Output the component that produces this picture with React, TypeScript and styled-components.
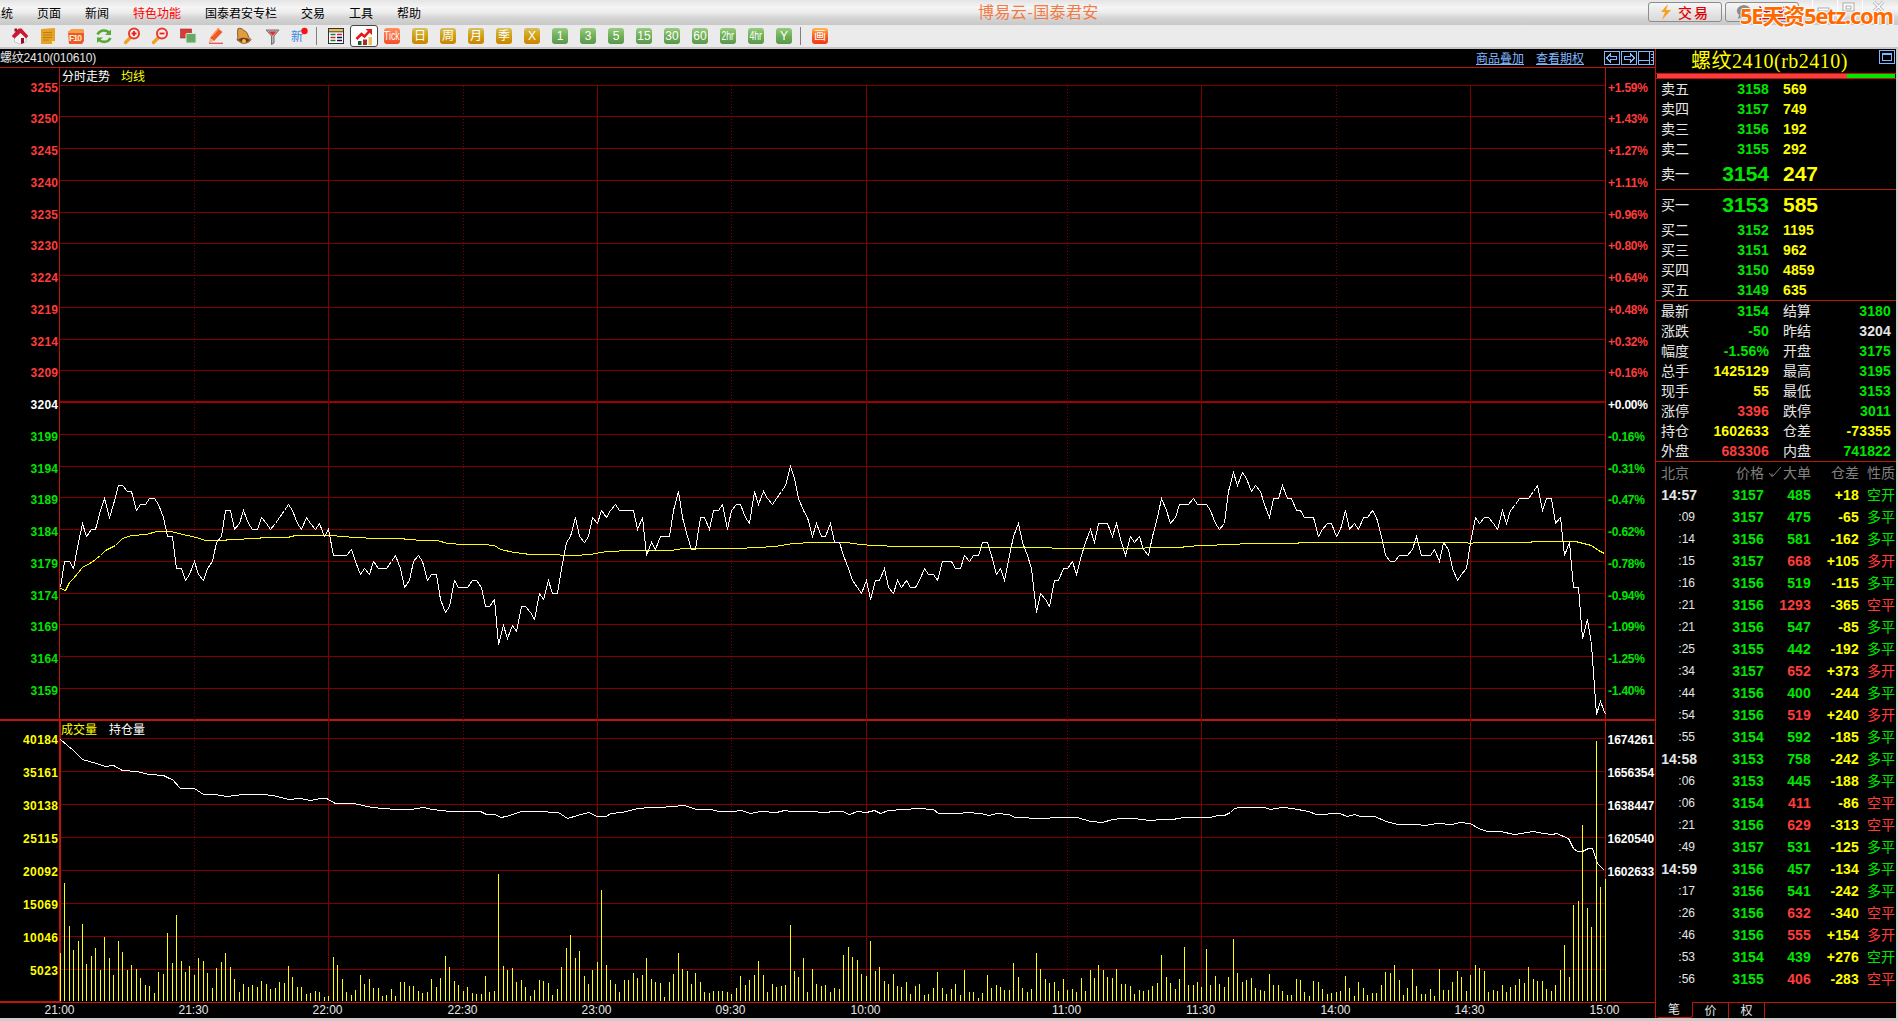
import React from 'react';
import styled, { createGlobalStyle } from 'styled-components';

const CJK = `'Noto Sans CJK SC', sans-serif`;

const GlobalStyle = createGlobalStyle`
  * { box-sizing: border-box; }
  body {
    margin: 0;
    overflow: hidden;
    background: #000;
    font-family: 'Liberation Sans', ${CJK};
    font-size: 12px;
  }
`;

const RED = '#ff3c3c';
const GREEN = '#00e600';
const YELLOW = '#ffff00';
const WHITE = '#e6e6e6';
const LINE = '#c01408';
const GRID = '#800000';

// ---------- data ----------

// one price per minute, offset from 3100
const PRICES = [
  75, 79, 79, 78, 82, 85, 83, 84, 84, 87, 89, 86, 88, 91, 91, 90, 90, 87, 88, 88, 89, 89, 88, 86, 83, 83, 78, 78, 76, 77,
  79, 77, 76, 78, 79, 82, 83, 87, 87, 84, 85, 87, 85, 84, 84, 86, 85, 84, 85, 86, 87, 88, 87, 85, 84, 86, 85, 84, 85, 83,
  84, 80, 80, 80, 80, 81, 79, 77, 78, 77, 79, 78, 78, 78, 79, 80, 78, 75, 76, 79, 80, 79, 76, 77, 77, 73, 71, 72, 76, 75,
  75, 75, 76, 76, 75, 72, 72, 73, 66, 69, 67, 69, 68, 72, 72, 71, 70, 74, 73, 76, 74, 74, 78, 82, 83, 86, 83, 82, 83, 86,
  85, 87, 86, 87, 88, 87, 87, 87, 87, 84, 86, 80, 82, 81, 83, 83, 83, 87, 90, 86, 83, 81, 81, 86, 86, 84, 87, 87, 88, 84,
  87, 88, 88, 86, 85, 90, 88, 90, 89, 88, 89, 90, 91, 94, 92, 89, 87, 86, 83, 85, 83, 83, 85, 82, 82, 80, 78, 76, 75, 74,
  76, 73, 76, 76, 78, 75, 74, 76, 75, 76, 75, 75, 76, 78, 77, 77, 76, 79, 79, 79, 78, 78, 80, 79, 80, 80, 82, 82, 80, 77,
  78, 76, 80, 83, 85, 82, 80, 78, 71, 74, 73, 72, 76, 76, 78, 78, 79, 77, 80, 82, 84, 82, 85, 85, 85, 83, 85, 82, 80, 83,
  82, 83, 81, 80, 83, 86, 89, 87, 85, 86, 88, 88, 88, 89, 88, 88, 88, 87, 85, 84, 85, 90, 93, 91, 93, 92, 90, 91, 90, 88,
  86, 89, 89, 91, 89, 89, 87, 87, 86, 86, 86, 83, 84, 85, 85, 83, 84, 87, 84, 85, 84, 86, 86, 87, 86, 83, 80, 79, 79, 80,
  80, 80, 81, 83, 80, 80, 80, 81, 79, 82, 81, 78, 76, 77, 78, 82, 86, 85, 86, 86, 85, 84, 87, 85, 87, 88, 89, 89, 89, 90,
  91, 87, 89, 89, 85, 86, 80, 82, 75, 75, 67, 70, 66, 55, 57, 55,
];

const VOLUMES = [
  48, 118, 75, 51, 60, 77, 37, 45, 53, 31, 64, 43, 26, 60, 49, 31, 36, 32, 23, 16, 15, 8, 29, 27, 68, 38, 86, 40, 29, 35,
  26, 43, 40, 28, 13, 33, 39, 48, 34, 22, 9, 17, 14, 16, 14, 20, 17, 12, 13, 19, 18, 35, 24, 14, 14, 7, 8, 10, 9, 4,
  5, 44, 36, 22, 9, 6, 11, 26, 17, 22, 13, 13, 5, 6, 12, 5, 19, 19, 15, 15, 10, 8, 9, 22, 14, 23, 45, 34, 20, 16,
  10, 14, 8, 7, 7, 25, 9, 10, 127, 35, 31, 33, 19, 21, 14, 5, 11, 21, 20, 18, 6, 12, 34, 53, 66, 43, 50, 25, 17, 31,
  39, 111, 36, 21, 17, 9, 21, 21, 28, 23, 26, 43, 22, 19, 18, 4, 19, 27, 48, 32, 30, 17, 28, 19, 9, 8, 10, 10, 10, 9,
  7, 13, 25, 16, 21, 26, 40, 26, 9, 17, 14, 15, 16, 76, 30, 24, 43, 9, 32, 17, 15, 16, 9, 13, 12, 46, 54, 44, 41, 27,
  25, 60, 30, 34, 20, 17, 27, 15, 14, 19, 7, 15, 17, 6, 7, 13, 29, 13, 7, 12, 17, 6, 31, 9, 9, 3, 8, 26, 13, 16,
  14, 11, 11, 38, 24, 13, 9, 12, 48, 32, 22, 18, 19, 10, 22, 11, 12, 9, 23, 10, 31, 23, 36, 31, 24, 23, 32, 17, 17, 15,
  7, 11, 10, 11, 15, 18, 46, 24, 18, 12, 22, 54, 16, 16, 19, 14, 52, 16, 25, 17, 14, 24, 62, 28, 19, 21, 23, 13, 11, 10,
  27, 16, 16, 10, 6, 6, 22, 21, 9, 5, 20, 19, 12, 7, 8, 9, 10, 25, 13, 5, 19, 13, 6, 8, 8, 16, 29, 28, 36, 21,
  6, 13, 32, 15, 7, 7, 12, 5, 32, 11, 11, 19, 30, 24, 10, 26, 36, 33, 30, 9, 11, 10, 16, 9, 14, 16, 22, 18, 34, 22,
  20, 20, 12, 10, 16, 31, 56, 24, 96, 100, 176, 93, 74, 260, 114, 122,
];

const AVERAGE =
  '60,588 65,590 69,582 73,578 82,567 91,562 100,555 105,550 115,545 122,538 131,535 146,534 156,531 171,531 178,533 187,535 196,537 205,540 223,540 229,539 258,538 262,537 287,537 295,535 333,535 340,536 357,537 374,538 402,538 406,539 425,540 437,540 447,543 463,544 483,544 494,545 500,549 514,552 530,554 546,554 573,555 590,554 606,551 631,550 671,550 682,548 738,548 756,547 775,546 787,544 792,543 814,542 846,542 860,544 873,545 900,546 958,546 961,547 1043,547 1060,548 1141,548 1148,547 1182,547 1184,546 1203,545 1231,544 1249,543 1297,543 1299,542 1464,542 1471,543 1474,542 1530,542 1532,541 1575,541 1591,545 1598,550 1604,553';

const POSITION =
  '60,739 67,745 73,750 82,759 96,763 105,766 113,765 122,770 136,771 149,774 163,775 169,778 172,779 180,788 194,788 203,794 215,794 226,796 243,794 262,794 273,795 288,799 300,798 310,800 320,798 326,798 335,803 353,803 372,807 395,809 410,809 423,807 432,809 450,811 480,811 486,814 495,814 500,817 506,816 521,811 537,811 558,812 567,818 577,815 588,812 597,816 606,816 610,813 622,812 637,808 651,807 659,807 672,806 684,805 696,809 711,809 718,811 733,811 741,810 750,813 760,811 776,812 784,810 791,811 808,811 826,812 832,811 842,811 849,814 857,811 866,812 874,810 880,813 888,810 903,809 918,808 933,809 938,813 959,813 967,812 980,813 989,815 996,813 1008,814 1015,817 1042,818 1057,817 1077,817 1090,821 1102,822 1112,819 1121,818 1133,818 1150,820 1162,819 1172,819 1184,817 1195,817 1210,817 1217,815 1224,815 1230,812 1234,808 1239,807 1264,807 1270,809 1282,807 1292,808 1308,811 1316,814 1339,813 1347,816 1354,814 1360,816 1374,816 1386,821 1397,824 1415,824 1425,825 1437,823 1452,824 1459,822 1470,823 1478,828 1487,831 1500,831 1514,834 1533,831 1543,833 1552,834 1556,833 1568,838 1573,848 1577,851 1582,851 1588,848 1592,848 1597,863 1600,866 1604,870';

const PRICE_LABELS = [3255, 3250, 3245, 3240, 3235, 3230, 3224, 3219, 3214, 3209, 3204, 3199, 3194, 3189, 3184, 3179, 3174, 3169, 3164, 3159];
const PERCENT_LABELS = ['+1.59%', '+1.43%', '+1.27%', '+1.11%', '+0.96%', '+0.80%', '+0.64%', '+0.48%', '+0.32%', '+0.16%', '+0.00%', '-0.16%', '-0.31%', '-0.47%', '-0.62%', '-0.78%', '-0.94%', '-1.09%', '-1.25%', '-1.40%'];
const VOLUME_LABELS = [40184, 35161, 30138, 25115, 20092, 15069, 10046, 5023];
const POSITION_LABELS = [1674261, 1656354, 1638447, 1620540, 1602633];
const TIMES: [string, number][] = [
  ['21:00', 0], ['21:30', 30], ['22:00', 60], ['22:30', 90], ['23:00', 120], ['09:30', 150],
  ['10:00', 180], ['11:00', 225], ['11:30', 255], ['14:00', 285], ['14:30', 315], ['15:00', 345],
];

const ASKS = [['卖五', 3158, 569], ['卖四', 3157, 749], ['卖三', 3156, 192], ['卖二', 3155, 292], ['卖一', 3154, 247]];
const BIDS = [['买一', 3153, 585], ['买二', 3152, 1195], ['买三', 3151, 962], ['买四', 3150, 4859], ['买五', 3149, 635]];

const QUOTES: [string, string, string, string, string, string][] = [
  ['最新', '3154', GREEN, '结算', '3180', GREEN],
  ['涨跌', '-50', GREEN, '昨结', '3204', WHITE],
  ['幅度', '-1.56%', GREEN, '开盘', '3175', GREEN],
  ['总手', '1425129', YELLOW, '最高', '3195', GREEN],
  ['现手', '55', YELLOW, '最低', '3153', GREEN],
  ['涨停', '3396', RED, '跌停', '3011', GREEN],
  ['持仓', '1602633', YELLOW, '仓差', '-73355', YELLOW],
  ['外盘', '683306', RED, '内盘', '741822', GREEN],
];

const TICKS: [string, number, number, string, string][] = [
  ['14:57', 3157, 485, '+18', '空开'],
  [':09', 3157, 475, '-65', '多平'],
  [':14', 3156, 581, '-162', '多平'],
  [':15', 3157, 668, '+105', '多开'],
  [':16', 3156, 519, '-115', '多平'],
  [':21', 3156, 1293, '-365', '空平'],
  [':21', 3156, 547, '-85', '多平'],
  [':25', 3155, 442, '-192', '多平'],
  [':34', 3157, 652, '+373', '多开'],
  [':44', 3156, 400, '-244', '多平'],
  [':54', 3156, 519, '+240', '多开'],
  [':55', 3154, 592, '-185', '多平'],
  ['14:58', 3153, 758, '-242', '多平'],
  [':06', 3153, 445, '-188', '多平'],
  [':06', 3154, 411, '-86', '空平'],
  [':21', 3156, 629, '-313', '空平'],
  [':49', 3157, 531, '-125', '多平'],
  ['14:59', 3156, 457, '-134', '多平'],
  [':17', 3156, 541, '-242', '多平'],
  [':26', 3156, 632, '-340', '空平'],
  [':46', 3156, 555, '+154', '多开'],
  [':53', 3154, 439, '+276', '空开'],
  [':56', 3155, 406, '-283', '空平'],
];

// ---------- styles ----------

const Window = styled.div`
  width: 1898px;
  height: 1021px;
  display: flex;
  flex-direction: column;
  background: #000;
  position: relative;
  overflow: hidden;
`;

const MenuBar = styled.div`
  height: 25px;
  flex: none;
  display: flex;
  background: linear-gradient(#e4e4e4 0%, #f5f5f5 30%, #ececec 50%, #d6d6d6 70%, #c8c8c8 100%);
`;

const Menu = styled.div`
  display: flex;
  flex: none;
  width: 1001px;
  margin-left: -23px;
`;

const MenuItem = styled.div<{ $hot?: boolean }>`
  padding: 0 12px;
  line-height: 26px;
  font-family: ${CJK};
  color: ${(p) => (p.$hot ? '#ff0000' : '#000')};
`;

const WindowTitle = styled.div`
  width: 670px;
  flex: none;
  line-height: 23px;
  font-size: 16px;
  font-family: ${CJK};
  color: #f27a45;
  letter-spacing: 0.4px;
`;

const BarButtons = styled.div`
  display: flex;
  gap: 3px;
  padding-top: 2px;
`;

const BarButton = styled.div`
  width: 74px;
  height: 20px;
  flex: none;
  border: 1px solid #8c8c8c;
  border-radius: 3px;
  background: linear-gradient(#f6f6f6, #d8d8d8);
  display: flex;
  align-items: center;
  padding-left: 10px;
  gap: 5px;
  color: #e00000;
  font: 500 14px/18px ${CJK};
  letter-spacing: 2px;
`;

const WindowControls = styled.div`
  display: flex;
  margin-left: 13px;
  height: 20px;
  svg { border-left: 1px solid #fff; }
`;

const Watermark = styled.div`
  position: absolute;
  left: 1740px;
  top: 0;
  font: 700 22px/30px 'Noto Sans', ${CJK};
  color: #ff6a00;
  letter-spacing: -1.25px;
  text-shadow: 1px 0 #fff, -1px 0 #fff, 0 1px #fff, 0 -1px #fff, 1px 1px 1px #fff;
  white-space: nowrap;
`;

const ToolBar = styled.div`
  height: 24px;
  flex: none;
  display: flex;
  background: #ebebeb;
  border-bottom: 2px solid #c9c4c4;
  padding-left: 6px;
`;

const Tool = styled.div<{ $active?: boolean }>`
  width: 28px;
  height: 22px;
  display: flex;
  align-items: center;
  justify-content: center;
  border: ${(p) => (p.$active ? '1px solid #444' : 'none')};
  border-radius: 3px;
  background: ${(p) => (p.$active ? '#fff' : 'none')};
`;

const Divider = styled.div`
  width: 8px;
  padding: 2px 0 2px 2px;
  &::before {
    content: '';
    display: block;
    width: 1px;
    height: 18px;
    background: #808080;
  }
`;

const badgeColors = {
  gold: 'linear-gradient(#d8c060, #d0a010 50%, #c88400)',
  green: 'linear-gradient(#98cc80, #70b058 50%, #58984c)',
  red: 'linear-gradient(#ff9060, #f05028)',
  draw: 'linear-gradient(#ffb850, #ff6020 50%, #f03818)',
};

const Badge = styled.div<{ $tone: keyof typeof badgeColors; $narrow?: boolean }>`
  width: 16px;
  height: 16px;
  border-radius: 3px;
  background: ${(p) => badgeColors[p.$tone]};
  color: #fff;
  font: 12px/16px 'Liberation Sans', ${CJK};
  display: flex;
  justify-content: center;
  span {
    display: block;
    white-space: nowrap;
    transform: ${(p) => (p.$narrow ? 'scaleX(0.72)' : 'none')};
  }
`;

const Body = styled.div`
  flex: 1;
  display: flex;
  min-height: 0;
  border-right: 2px solid #d0caca;
  border-bottom: 3px solid #d0caca;
`;

const ChartPane = styled.div`
  width: 1655px;
  flex: none;
  display: flex;
  flex-direction: column;
`;

const ChartHeader = styled.div`
  height: 18px;
  flex: none;
  display: flex;
  align-items: center;
  color: #e6e6e6;
  font: 12px/18px 'Liberation Sans', ${CJK};
  letter-spacing: -0.2px;
`;

const Links = styled.div`
  margin-left: auto;
  display: flex;
  gap: 12px;
  margin-right: 20px;
  letter-spacing: 0;
`;

const Link = styled.a`
  color: #80b8ff;
  font-family: ${CJK};
  text-decoration: underline;
`;

const Chart = styled.svg`
  display: block;
  text {
    font: bold 12px 'Liberation Sans', ${CJK};
  }
  text.plain {
    font-weight: normal;
  }
`;

const SidePane = styled.div`
  flex: 1;
  border-left: 1px solid ${LINE};
  display: flex;
  flex-direction: column;
`;

const Symbol = styled.div`
  height: 24px;
  display: flex;
  align-items: flex-start;
  justify-content: flex-end;
  gap: 31px;
  padding-right: 1px;
  color: ${YELLOW};
  font: 20px/24px 'Liberation Serif', ${CJK};
  letter-spacing: 0.5px;
`;

const RatioBar = styled.div`
  height: 6px;
  border-top: 1px solid ${LINE};
  border-bottom: 1px solid ${LINE};
  display: flex;
  padding: 0 1px;
`;

const Ratio = styled.div<{ $size: number; $color: string }>`
  flex: ${(p) => p.$size};
  background: ${(p) => p.$color};
`;

const Section = styled.div`
  border-bottom: 1px solid ${LINE};
`;

const Label = styled.div<{ $dim?: boolean }>`
  font: 14px/18px ${CJK};
  padding-bottom: 2px;
  color: ${(p) => (p.$dim ? '#808080' : WHITE)};
`;

const Num = styled.div<{ $color: string; $big?: boolean; $left?: boolean }>`
  color: ${(p) => p.$color};
  font-weight: bold;
  font-size: ${(p) => (p.$big ? '21px' : '14px')};
  letter-spacing: ${(p) => (p.$big ? '0' : '0.15px')};
  text-align: ${(p) => (p.$left ? 'left' : 'right')};
`;

const DepthRow = styled.div<{ $big?: boolean }>`
  display: grid;
  grid-template-columns: 40px 68px 1fr;
  align-items: center;
  height: ${(p) => (p.$big ? '30px' : '20px')};
  padding-left: 5px;
  ${Num}:last-child { padding-left: 14px; }
`;

const QuoteRow = styled.div`
  display: grid;
  grid-template-columns: 28px 80px 28px 1fr;
  align-items: center;
  height: 20px;
  padding: 0 5px;
  ${Label}:nth-child(3) { padding-left: 14px; white-space: nowrap; }
`;

const TickRow = styled.div`
  display: grid;
  grid-template-columns: 36px 67px 47px 48px 36px;
  align-items: center;
  height: 22px;
  padding-left: 5px;
  ${Label} { text-align: right; white-space: nowrap; }
`;

const TickHead = styled(TickRow)`
  ${Label}:first-child { text-align: left; }
`;

const Time = styled.div<{ $minute: boolean }>`
  color: ${WHITE};
  text-align: right;
  font-size: ${(p) => (p.$minute ? '14px' : '12px')};
  font-weight: ${(p) => (p.$minute ? 'bold' : 'normal')};
  padding-right: ${(p) => (p.$minute ? '0' : '2px')};
`;

const Nature = styled.div<{ $color: string }>`
  font: 14px/18px ${CJK};
  padding-bottom: 2px;
  color: ${(p) => p.$color};
  text-align: right;
`;

const Tabs = styled.div`
  margin-top: auto;
  height: 16px;
  display: flex;
`;

const Tab = styled.div<{ $active?: boolean }>`
  width: ${(p) => (p.$active ? '37px' : '36px')};
  text-align: center;
  font: 12px/14px ${CJK};
  color: ${WHITE};
  border-right: 1px solid ${LINE};
  border-top: ${(p) => (p.$active ? 'none' : `1px solid ${LINE}`)};
  border-bottom: ${(p) => (p.$active ? `1px solid ${LINE}` : 'none')};
  border-radius: ${(p) => (p.$active ? '0 0 3px 3px' : '0')};
`;

const TabRest = styled.div`
  flex: 1;
  border-top: 1px solid ${LINE};
`;

// ---------- toolbar icons ----------

const Icon: React.FC<{ children: React.ReactNode }> = ({ children }) => (
  <svg width="18" height="18" viewBox="0 0 18 18" fill="none">{children}</svg>
);

const Magnifier: React.FC<{ plus?: boolean }> = ({ plus }) => (
  <Icon>
    <path d="M7.5 10.5 2.5 15.5" stroke="#f0a020" strokeWidth="3.2" strokeLinecap="round" />
    <circle cx="11" cy="6.5" r="5" fill="#fff0f0" stroke="#e83828" strokeWidth="2" />
    <path d={plus ? 'M8.5 6.5h5M11 4v5' : 'M8.5 6.5h5'} stroke="#e02020" strokeWidth="1.8" />
  </Icon>
);

const leftTools = [
  <Icon key="home">
    <path d="M3.5 8.5 9 4l6 5v6l-5.500 2-6-2z" fill="#f4f4f4" stroke="#b0b0b0" strokeWidth=".6" />
    <path d="M.8 9 7.500 1.500h3L17.200 9l-2 2.500L9.500 6 3.500 11.500z" fill="#cc1830" />
    <path d="M3.500 1.500H6v3H3.500z" fill="#901020" />
    <path d="M10 11h3v5l-3 1z" fill="#981020" />
  </Icon>,
  <Icon key="note">
    <path d="M2 2 16 1v13l-3 3H2z" fill="#e4a428" />
    <path d="M4 5.500h9M4 8h9M4 10.500h9M4 13h6" stroke="#b87808" strokeWidth=".9" />
    <path d="m13 17 3-3h-3z" fill="#fff0b0" />
  </Icon>,
  <Icon key="f10">
    <path d="M1 5 5 2h11l1 3v9l-2 3H2z" fill="#ec5830" />
    <path d="M1 5 5 2h11l1 3v1H1z" fill="#f8a048" />
    <text x="2" y="14" fontSize="8.5" fontWeight="bold" fill="#fff4c0" textLength="13">F10</text>
  </Icon>,
  <Icon key="refresh">
    <path d="M2.500 7.500C5 2.500 11 2.500 14 5.500M15.500 11c-2.500 5-8.500 4.500-11.500 2" stroke="#58a838" strokeWidth="2.600" />
    <path d="M16 2.500v5.500h-6zM2 16v-5.500h6z" fill="#58a838" />
  </Icon>,
  <Magnifier key="in" plus />,
  <Magnifier key="out" />,
  <Icon key="overlay">
    <rect x="1.5" y="2" width="11" height="9" fill="#d83c38" stroke="#a02828" strokeWidth=".6" />
    <rect x="7" y="6.5" width="10" height="9.5" rx="1" fill="#68a868" stroke="#d8e8d8" />
  </Icon>,
  <Icon key="pen">
    <path d="m3 11 8-9.500 4.500 3.500-8.500 9z" fill="#f05828" />
    <path d="m5 9 7-8" stroke="#ff9858" strokeWidth="1.500" />
    <path d="M3 11 1.500 16 7 14z" fill="#e8c080" />
    <path d="M2 16.300h14" stroke="#e84848" strokeWidth="1.200" />
  </Icon>,
  <Icon key="bell">
    <path d="M3 1.500c2-.8 4 0 6 2 3 1 4 4 4.500 6.500l2.500 2.500c-1 3-6 4.500-9.500 3.500L2 13c2-3-.5-6 1-11.500z" fill="#e09c40" stroke="#704018" strokeWidth=".8" />
    <path d="M3 12.500c4-2.500 8-2.500 12 .5-3 3-8 3.500-12-.5z" fill="#70381c" />
    <circle cx="9" cy="14" r="2" fill="#f0c040" />
  </Icon>,
  <Icon key="filter">
    <path d="M3 3h13l-5 6v7l-2.500 1.500V9z" fill="#b8b8b8" stroke="#707070" />
    <path d="M5.500 4.500h8L9.700 8.500z" fill="#f02828" />
  </Icon>,
  <Icon key="new">
    <text x="0" y="14" fontSize="12" fill="#3c88e0" fontFamily="Noto Sans CJK SC">新</text>
    <circle cx="13.5" cy="4" r="3.2" fill="#ff1010" />
  </Icon>,
];

const TableIcon = () => (
  <Icon>
    <rect x="1.5" y="1.5" width="15" height="15" fill="#fff" stroke="#303030" />
    <path d="M2 3h14" stroke="#f0c040" strokeWidth="2" />
    <path d="M2 4.800h14" stroke="#303030" />
    <path d="M3.500 7.500h5M3.500 13.500h5" stroke="#108030" strokeWidth="1.300" />
    <path d="M10 7.500h5M3.500 10.500h5" stroke="#e02020" strokeWidth="1.300" />
    <path d="M10 10.500h5M10 13.500h5" stroke="#101060" strokeWidth="1.300" />
  </Icon>
);

const TrendIcon = () => (
  <Icon>
    <path d="M3 14h3.500v4H3z" fill="#205830" />
    <path d="M8 12.500h4V18H8z" fill="#a03028" />
    <path d="M13.500 10H17v8h-3.500z" fill="#e8c060" />
    <path d="m1.500 12 5-5 3 2.500 5-5.500" stroke="#e81818" strokeWidth="2.600" />
    <path d="M10.500 2H17v6z" fill="#e81818" />
  </Icon>
);

const badges: [string, keyof typeof badgeColors][] = [
  ['Tick', 'red'], ['日', 'gold'], ['周', 'gold'], ['月', 'gold'], ['季', 'gold'], ['X', 'gold'],
  ['1', 'green'], ['3', 'green'], ['5', 'green'], ['15', 'green'], ['30', 'green'], ['60', 'green'],
  ['2hr', 'green'], ['4hr', 'green'], ['Y', 'green'],
];

// ---------- chart ----------

const minuteX = (i: number) => Math.floor(60.1 + i * 4.478);
const priceY = (p: number) => Math.round(402 + (104 - p) * 6.37);
const gridY = (i: number) => Math.floor(85 + i * 31.75);
const volumeGridY = (i: number) => 738 + i * 33;

const TrendChart = () => (
  <Chart width="1655" height="951" viewBox="0 67 1655 951">
    <g shapeRendering="crispEdges" fill="none">
      {PRICE_LABELS.map((p, i) => (
        <path
          key={p}
          d={`M60 ${i === 10 ? gridY(i) : gridY(i) + 0.5}H1605`}
          stroke={i === 10 ? '#a00000' : GRID}
          strokeWidth={i === 10 ? 2 : 1}
        />
      ))}
      {VOLUME_LABELS.map((v, i) => (
        <path key={v} d={`M60 ${volumeGridY(i) + 0.5}H1605`} stroke={GRID} />
      ))}
      <path d="M0 67.5H1655M59.5 67V1001M1605.5 67V1001" stroke={LINE} />
      <path d="M0 720H1655M0 1002H59M60 720V1002" stroke={LINE} strokeWidth="2" />
      <path d="M59 1002.5H1655" stroke={LINE} />
      {TIMES.slice(1, -1).map(([t, m]) => {
        const dotted = t === '11:00' || t === '14:00' || (t.endsWith('30') && t !== '11:30' && t !== '14:30');
        return <path key={t} d={`M${minuteX(m) + 0.5} 86V1001`} stroke={GRID} strokeDasharray={dotted ? '1 2' : undefined} />;
      })}
      <path d={VOLUMES.map((v, i) => `M${minuteX(i) + 0.5} 1001v${-v}`).join('')} stroke={YELLOW} />
      <polyline points={AVERAGE} stroke={YELLOW} transform="translate(0.5 0.5)" />
      <polyline points={PRICES.map((p, i) => `${minuteX(i) + 0.5},${priceY(p) + 0.5}`).join(' ')} stroke="#fff" />
      <polyline points={POSITION} stroke="#fff" transform="translate(0.5 0.5)" />
    </g>
    {PRICE_LABELS.map((p, i) => {
      const color = i < 10 ? RED : i === 10 ? '#fff' : GREEN;
      return (
        <g key={p} fill={color}>
          <text x="58" y={gridY(i) + 7} textAnchor="end" textLength="27.5">{p}</text>
          <text x="1608" y={gridY(i) + 7} textLength={i > 10 ? 37 : 40}>{PERCENT_LABELS[i]}</text>
        </g>
      );
    })}
    {VOLUME_LABELS.map((v, i) => (
      <text key={v} x="58" y={volumeGridY(i) + 6} fill={YELLOW} textAnchor="end" textLength={v > 9999 ? 35 : 28}>{v}</text>
    ))}
    {POSITION_LABELS.map((v, i) => (
      <text key={v} x="1607.5" y={volumeGridY(i) + 6} fill="#fff">{v}</text>
    ))}
    {TIMES.map(([t, m]) => (
      <text key={t} className="plain" x={minuteX(m) - 0.5} y="1014" fill={WHITE} textAnchor="middle">{t}</text>
    ))}
    <text className="plain" x="62" y="81" fill="#fff">分时走势</text>
    <text className="plain" x="121" y="81" fill={YELLOW}>均线</text>
    <text className="plain" x="61" y="734" fill={YELLOW}>成交量</text>
    <text className="plain" x="109" y="734" fill="#fff">持仓量</text>
  </Chart>
);

const PaneIcons = () => (
  <svg width="51" height="16" fill="none" stroke="#80b8ff" shapeRendering="crispEdges">
    <path d="M.5 1.500h15v13H.5zM17.500 1.500h15v13h-15zM34.500 1.500h15v13h-15z" />
    <path d="M2.500 8l4-4v2.500h6v3h-6V12zM30.500 8l-4-4v2.500h-6v3h6V12zM35 10.500h10M45.500 2v12M47 4.500h2M47 7.500h2M47 10.500h2" />
  </svg>
);

// ---------- side panel ----------

const Depth: React.FC<{ rows: (string | number)[][]; bigIndex: number }> = ({ rows, bigIndex }) => (
  <Section>
    {rows.map(([label, price, qty], i) => (
      <DepthRow key={label} $big={i === bigIndex}>
        <Label>{label}</Label>
        <Num $color={GREEN} $big={i === bigIndex}>{price}</Num>
        <Num $color={YELLOW} $big={i === bigIndex} $left>{qty}</Num>
      </DepthRow>
    ))}
  </Section>
);

// active buying (多开) and active short closing (空平) print in red
const natureColor = (n: string) => (n === '多开' || n === '空平' ? RED : GREEN);

const QuotePanel = () => (
  <SidePane>
    <Symbol>
      螺纹2410(rb2410)
      <svg width="16" height="16" fill="none" stroke="#80b8ff" shapeRendering="crispEdges">
        <path d="M.5 1.500h15v13H.5zM3.500 4.500h9v7h-9zM3 5.500h10" />
      </svg>
    </Symbol>
    <RatioBar>
      <Ratio $size={190} $color={RED} />
      <Ratio $size={48} $color={GREEN} />
    </RatioBar>
    <Depth rows={ASKS} bigIndex={4} />
    <Depth rows={BIDS} bigIndex={0} />
    <Section>
      {QUOTES.map(([l1, v1, c1, l2, v2, c2]) => (
        <QuoteRow key={l1}>
          <Label>{l1}</Label>
          <Num $color={c1}>{v1}</Num>
          <Label>{l2}</Label>
          <Num $color={c2}>{v2}</Num>
        </QuoteRow>
      ))}
    </Section>
    <TickHead>
      <Label $dim>北京</Label>
      <Label $dim>价格</Label>
      <Label $dim>
        <svg width="14" height="12" fill="none" stroke="#808080"><path d="M0 7l3 3.500V7.500M3.500 10.500 12 1" /></svg>
        大单
      </Label>
      <Label $dim>仓差</Label>
      <Label $dim>性质</Label>
    </TickHead>
    {TICKS.map(([time, price, qty, diff, nature], i) => (
      <TickRow key={i}>
        <Time $minute={time.length > 3}>{time}</Time>
        <Num $color={GREEN}>{price}</Num>
        <Num $color={natureColor(nature)}>{qty}</Num>
        <Num $color={YELLOW}>{diff}</Num>
        <Nature $color={natureColor(nature)}>{nature}</Nature>
      </TickRow>
    ))}
    <Tabs>
      <Tab $active>笔</Tab>
      <Tab>价</Tab>
      <Tab>权</Tab>
      <TabRest />
    </Tabs>
  </SidePane>
);

const App: React.FC = () => {
  return (
    <>
      <GlobalStyle />
      <Window>
        <MenuBar>
          <Menu>
            {['系统', '页面', '新闻', '特色功能', '国泰君安专栏', '交易', '工具', '帮助'].map((m) => (
              <MenuItem key={m} $hot={m === '特色功能'}>{m}</MenuItem>
            ))}
          </Menu>
          <WindowTitle>博易云-国泰君安</WindowTitle>
          <BarButtons>
            <BarButton>
              <svg width="14" height="16"><path d="M9 0 2 8h4l-3 8 9-10H7z" fill="#f8a020" /></svg>
              交易
            </BarButton>
            <BarButton>
              <svg width="16" height="14"><path d="M8 0a8 6 0 1 1-2 12l-4 2 1-4A8 6 0 0 1 8 0z" fill="#8c8c8c" /></svg>
              社区
            </BarButton>
          </BarButtons>
          <WindowControls>
            <svg width="25" height="20" fill="none"><rect x="5" y="8" width="11" height="3" stroke="#aaa" fill="#fff" /></svg>
            <svg width="25" height="20" fill="none"><rect x="5" y="3" width="11" height="8" stroke="#aaa" fill="#fff" /><rect x="8" y="6" width="5" height="3" stroke="#aaa" /></svg>
            <svg width="33" height="20" fill="none"><path d="m11 2 9 9M20 2l-9 9" stroke="#aaa" strokeWidth="3" /><path d="m11 2 9 9M20 2l-9 9" stroke="#fff" strokeWidth="1.5" /></svg>
          </WindowControls>
        </MenuBar>
        <Watermark>5E天资5etz.com</Watermark>
        <ToolBar>
          {leftTools.map((icon, i) => <Tool key={i}>{icon}</Tool>)}
          <Divider />
          <Tool><TableIcon /></Tool>
          <Tool $active><TrendIcon /></Tool>
          {badges.map(([label, tone]) => (
            <Tool key={label}>
              <Badge $tone={tone} $narrow={label.length > 2}><span>{label}</span></Badge>
            </Tool>
          ))}
          <Divider />
          <Tool><Badge $tone="draw"><span>画</span></Badge></Tool>
        </ToolBar>
        <Body>
          <ChartPane>
            <ChartHeader>
              螺纹2410(010610)
              <Links>
                <Link>商品叠加</Link>
                <Link>查看期权</Link>
              </Links>
              <PaneIcons />
            </ChartHeader>
            <TrendChart />
          </ChartPane>
          <QuotePanel />
        </Body>
      </Window>
    </>
  );
};

export default App;
